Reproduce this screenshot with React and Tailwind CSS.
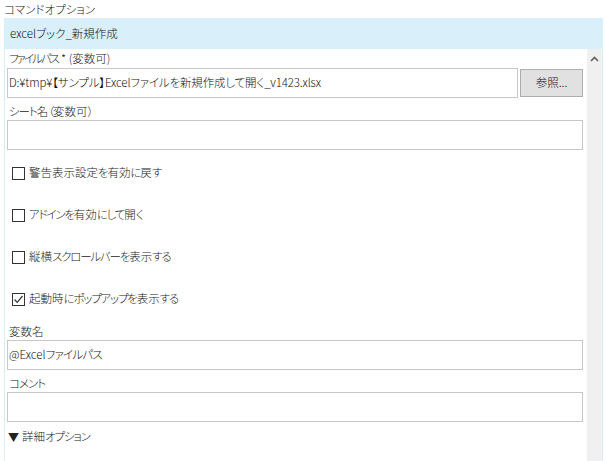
import { useState } from 'react'

const font = { fontFamily: '"Noto Sans CJK JP", "Noto Sans", sans-serif', fontFeatureSettings: '"palt"' }

// narrow katakana / hiragana runs, Meiryo UI style
function Jp({ text, kana = 'tracking-[-1px]' }) {
  const parts = text.split(/([\u3040-\u30ff\uff08\uff09]+)/)
  return (
    <>
      {parts.map((p, i) =>
        /[\u3040-\u30ff\uff08\uff09]/.test(p) ? <span key={i} className={kana}>{p}</span> : <span key={i}>{p}</span>
      )}
    </>
  )
}

function Field({ label, value, labelClass }) {
  return (
    <>
      <div className={`pl-[4px] text-[#222] leading-[16px] flex items-end ${labelClass}`}><Jp text={label} /></div>
      <div className="ml-[2px] h-[30px] border border-[#c8c8c8] bg-white flex items-center pl-[1px] text-[#111] whitespace-nowrap overflow-hidden">
        <Jp text={value} kana="tracking-[-0.8px]" />
      </div>
    </>
  )
}

function Check({ label, checked }) {
  return (
    <div className="h-[42px] flex items-center pl-[7px] gap-[4px]">
      <div className="w-[13px] h-[13px] border border-[#333] bg-white flex items-center justify-center">
        {checked && (
          <svg width="11" height="11" viewBox="0 0 11 11">
            <path d="M1.5 5.5 L4.2 8.3 L9.5 2" fill="none" stroke="#333" strokeWidth="1.2" />
          </svg>
        )}
      </div>
      <span className="text-[#222]"><Jp text={label} kana="tracking-[-1.2px]" /></span>
    </div>
  )
}

export default function App() {
  const [checks] = useState([
    { label: '警告表示設定を有効に戻す', checked: false },
    { label: 'アドインを有効にして開く', checked: false },
    { label: '縦横スクロールバーを表示する', checked: false },
    { label: '起動時にポップアップを表示する', checked: true },
  ])

  return (
    <div className="w-[606px] h-[461px] bg-white overflow-hidden text-[11.5px] font-light" style={font}>
      <div className="h-[18px] pl-[4px] text-[#222] leading-[18px]">コマンドオプション</div>
      <div className="ml-[4px] w-[599px] flex flex-col">
        <div className="h-[31px] bg-[#d9effa] pl-[6px] flex items-center text-[#111]">excelブック_新規作成</div>
        <div className="flex border-l border-r border-[#d9effa] h-[412px]">
          <div className="flex-1 flex flex-col pr-[4px]">
            <div className="h-[19px] pl-[4px] text-[#222] flex items-center whitespace-pre">
              <Jp text="ファイルパス" kana="tracking-[-2px]" /><span className="ml-[3px]">* (</span>変数可)
            </div>
            <div className="flex gap-[2px] ml-[2px]">
              <div className="flex-1 h-[30px] border border-[#c8c8c8] flex items-center pl-[1px] text-[#111] whitespace-nowrap overflow-hidden tracking-[-0.15px]">
                D:¥tmp¥【サンプル】Excelファイルを新規作成して開く_v1423.xlsx
              </div>
              <button className="w-[63px] h-[28px] mt-[1px] border border-[#adadad] bg-[#e1e1e1] text-[#111]">参照...</button>
            </div>
            <Field label="シート名（変数可）" value="" labelClass="h-[22px] pb-[1px]" />
            <div className="h-[2px]" />
            {checks.map(c => <Check key={c.label} {...c} />)}
            <Field label="変数名" value="@Excelファイルパス" labelClass="h-[20px] pb-[1px]" />
            <Field label="コメント" value="" labelClass="h-[22px] pb-[1px]" />
            <div className="h-[30px] pl-[3px] flex items-center gap-[3px] text-[#222]">
              <span className="text-[11px]">▼</span>
              <span><Jp text="詳細オプション" kana="tracking-[-1.2px]" /></span>
            </div>
          </div>
          <div className="w-[15px] bg-[#f0f0f0] flex justify-center pt-[7px]">
            <svg width="9" height="6" viewBox="0 0 9 6">
              <path d="M1 5 L4.5 1.5 L8 5" fill="none" stroke="#606060" strokeWidth="1.6" />
            </svg>
          </div>
        </div>
      </div>
    </div>
  )
}
